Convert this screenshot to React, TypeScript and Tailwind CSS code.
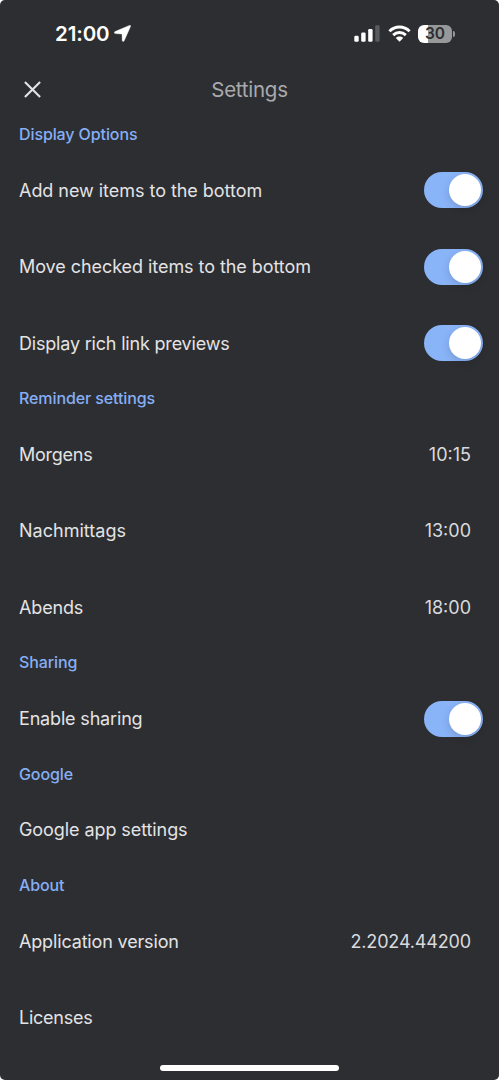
import { ReactNode } from "react"

function StatusBar() {
  return (
    <div className="flex h-[67px] items-center justify-between pr-[44px] pl-[55px]">
      <div className="flex items-center gap-[4px]">
        <span className="text-[20.5px] leading-6 font-semibold tracking-[-0.1px] text-white">21:00</span>
        <svg className="h-[17px] w-[17px]" viewBox="0 0 17 17" fill="#fff">
          <path d="M15.4 0.4L1 6.6C0 7.1 0.2 8.5 1.3 8.6L7.5 9C7.9 9 8 9.1 8 9.4L8.2 15.4C8.3 16.7 9.7 16.8 10.2 15.7L16.5 1.5C16.8 0.6 16.2 0.1 15.4 0.4Z" stroke="#fff" strokeWidth="0.4" />
        </svg>
      </div>
      <div className="flex items-center">
        <svg className="h-[17px] w-[26px]" viewBox="0 0 26 17" fill="#fff">
          <rect x="0.3" y="10.7" width="4.4" height="6" rx="1.2" />
          <rect x="7.2" y="7.6" width="4.4" height="9.1" rx="1.2" />
          <rect x="14.2" y="4" width="4.4" height="12.7" rx="1.2" />
          <rect x="21.2" y="0.3" width="4.4" height="16.4" rx="1.2" fill="#5a5b5e" />
        </svg>
        <svg className="ml-[8px] h-[17px] w-[23px]" viewBox="0 0 23 17" fill="none" stroke="#fff" strokeWidth="2.9">
          <path d="M1.4 6.2C7.1 0.6 15.9 0.6 21.6 6.2" />
          <path d="M5.2 10.1C8.8 6.6 14.2 6.6 17.8 10.1" />
          <path d="M11.5 16.7L7.8 13C9.9 11.1 13.1 11.1 15.2 13Z" fill="#fff" stroke="none" />
        </svg>
        <div className="ml-[7px] flex items-center gap-[1px]">
          <div className="flex h-[18px] w-[34px] items-center justify-center rounded-[6px] bg-[linear-gradient(90deg,#fff_30%,#97989a_30%)]">
            <span className="text-[15.5px] leading-[18px] font-semibold text-[#2d2e31]">30</span>
          </div>
          <div className="h-[6px] w-[2px] rounded-r-full bg-[#97989a]" />
        </div>
      </div>
    </div>
  )
}

function Header() {
  return (
    <div className="grid h-[50px] grid-cols-[1fr_auto_1fr] items-center px-[24px] pb-[5px]">
      <svg className="h-[17px] w-[17px]" viewBox="0 0 17 17" stroke="#e3e3e5" strokeWidth="2.1">
        <path d="M0.9 0.9L16.1 16.1M16.1 0.9L0.9 16.1" />
      </svg>
      <h1 className="text-[20.5px] leading-6 font-normal tracking-[-0.25px] text-[#a9aaad]">Settings</h1>
    </div>
  )
}

function Section({ title, children }: { title: string; children: ReactNode }) {
  return (
    <section>
      <h2 className="flex h-[34.8px] items-center pb-[1px] text-[16px] font-medium tracking-[-0.1px] text-[#86aef5]">{title}</h2>
      {children}
    </section>
  )
}

function Row({ label, tracking = "tracking-[0.02px]", children }: { label: string; tracking?: string; children?: ReactNode }) {
  return (
    <div className="flex h-[76.5px] items-center justify-between text-[18px] text-[#e3e3e5]">
      <span className={tracking}>{label}</span>
      {children}
    </div>
  )
}

function Value({ children }: { children: ReactNode }) {
  return <span className="pr-[12px] text-[#dadade]">{children}</span>
}

function Toggle() {
  return (
    <button role="switch" aria-checked="true" className="flex h-[36px] w-[59.5px] items-center justify-end rounded-full bg-[#8ab4f8] pr-[2px]">
      <span className="h-[32px] w-[32px] rounded-full bg-white shadow-[0_3px_8px_rgba(0,0,0,0.15)]" />
    </button>
  )
}

export default function App() {
  return (
    <div className="h-[1080px] w-[499px] bg-white">
      <div className="flex h-full flex-col overflow-hidden rounded-[5px] bg-[#2d2e31] font-['Inter',sans-serif]">
        <StatusBar />
        <Header />
        <main className="flex-1 pr-[16px] pl-[19px]">
          <Section title="Display Options">
            <Row label="Add new items to the bottom" tracking="tracking-[-0.04px]"><Toggle /></Row>
            <Row label="Move checked items to the bottom" tracking="tracking-[-0.06px]"><Toggle /></Row>
            <Row label="Display rich link previews" tracking="tracking-[-0.19px]"><Toggle /></Row>
          </Section>
          <Section title="Reminder settings">
            <Row label="Morgens" tracking="tracking-[-0.25px]"><Value>10:15</Value></Row>
            <Row label="Nachmittags"><Value>13:00</Value></Row>
            <Row label="Abends" tracking="tracking-[-0.15px]"><Value>18:00</Value></Row>
          </Section>
          <Section title="Sharing">
            <Row label="Enable sharing" tracking="tracking-[-0.17px]"><Toggle /></Row>
          </Section>
          <Section title="Google">
            <Row label="Google app settings" tracking="tracking-[-0.08px]" />
          </Section>
          <Section title="About">
            <Row label="Application version" tracking="tracking-[-0.16px]"><Value><span className="tracking-[-0.15px]">2.2024.44200</span></Value></Row>
            <Row label="Licenses" tracking="tracking-[-0.25px]" />
          </Section>
        </main>
        <div className="mx-auto mb-[9px] h-[6px] w-[179px] rounded-full bg-white" />
      </div>
    </div>
  )
}
